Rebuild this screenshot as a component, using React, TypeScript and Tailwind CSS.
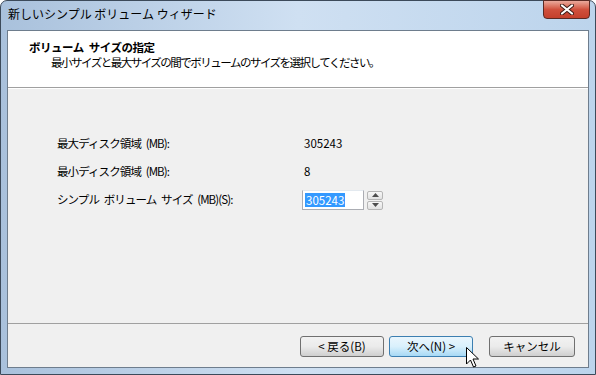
import React from 'react';

const jp = { fontFamily: "'Noto Sans CJK JP', 'Noto Sans', sans-serif" };

const WinButton: React.FC<{ label: string; hot?: boolean; className?: string }> = ({ label, hot, className }) => (
  <div
    className={`h-[21px] w-[84px] rounded-[3px] border flex items-center justify-center text-[11.5px] leading-none text-black ${
      hot
        ? 'border-[#3c7fb1] bg-gradient-to-b from-[#eaf6fd] via-[#d9f0fc] to-[#a7d9f5]'
        : 'border-[#707070] bg-gradient-to-b from-[#f2f2f2] via-[#ebebeb] to-[#cfcfcf]'
    } ${className ?? ''}`}
  >
    {label}
  </div>
);

const Cursor = () => (
  <svg width="13" height="21" viewBox="0 0 13 21" className="absolute left-[466px] top-[347px]">
    <path d="M0.5 0.5 L0.5 17 L4.5 13 L7.5 20 L10 19 L7 12 L12.5 12 Z" fill="#fff" stroke="#000" strokeWidth="1" strokeLinejoin="round" />
  </svg>
);

const App: React.FC = () => {
  return (
    <div className="relative w-[596px] h-[375px] overflow-hidden bg-white" style={jp}>
      {/* window frame */}
      <div className="w-full h-full flex flex-col rounded-t-[7px] border border-[#3c4a5a] bg-gradient-to-r from-[#a9c1dc] via-[#cfe0f2] to-[#bcd4ec]">
        {/* title bar */}
        <div className="h-[29px] flex items-start justify-between">
          <span className="pl-[7px] pt-[7px] text-[12px] leading-none text-black">新しいシンプル ボリューム ウィザード</span>
          <div className="mr-[5px] mt-[-1px] w-[47px] h-[19px] rounded-b-[4px] border border-[#5a2a24] bg-gradient-to-b from-[#e9a99c] via-[#d0503d] to-[#c4402c] flex items-center justify-center">
            <svg width="14" height="11" viewBox="0 0 14 11">
              <path d="M2 1.5 L12 9.5 M12 1.5 L2 9.5" stroke="#3b1a15" strokeWidth="4" strokeLinecap="round" />
              <path d="M2 1.5 L12 9.5 M12 1.5 L2 9.5" stroke="#fff" strokeWidth="2.2" strokeLinecap="round" />
            </svg>
          </div>
        </div>

        {/* client area */}
        <div className="mx-[6px] flex-1 flex flex-col border border-[#6e7d8d] bg-[#f0f0f0]">
          {/* header */}
          <div className="h-[57px] bg-white border-b border-[#a0a0a0] flex flex-col pt-[9px] text-[11.5px] text-black">
            <div className="pl-[21px] font-bold leading-[15px] tracking-[-0.5px] [word-spacing:3px]">ボリューム サイズの指定</div>
            <div className="pl-[43px] leading-[15px] tracking-[-1.5px]">最小サイズと最大サイズの間でボリュームのサイズを選択してください。</div>
          </div>

          {/* body */}
          <div className="flex-1 border-t border-white pt-[45px] pl-[49px]">
            <div className="grid grid-cols-[247px_auto] auto-rows-[28px] text-[11.5px] tracking-[-0.9px] [word-spacing:3px] text-black">
              <div className="flex items-center h-[20px]">最大ディスク領域 (MB):</div>
              <div className="flex items-center h-[20px] tracking-normal">305243</div>
              <div className="flex items-center h-[20px]">最小ディスク領域 (MB):</div>
              <div className="flex items-center h-[20px] tracking-normal">8</div>
              <div className="flex items-center h-[20px]">シンプル ボリューム サイズ (MB)(S):</div>
              <div className="flex items-center h-[20px] -ml-[2px] gap-[3px] tracking-normal">
                <div className="w-[62px] h-[20px] border border-[#abadb3] border-t-[#e3e9ef] bg-white flex items-center pl-[2px]">
                  <span className="bg-[#3399ff] text-white leading-[14px] px-[1px]">305243</span>
                </div>
                <div className="flex flex-col gap-[1px]">
                  <div className="w-[16px] h-[9px] rounded-[2px] border border-[#b5b5b5] bg-gradient-to-b from-[#f7f7f7] to-[#e2e2e2] flex items-center justify-center">
                    <svg width="7" height="4" viewBox="0 0 7 4"><path d="M0 4 L3.5 0 L7 4 Z" fill="#4d4d4d" /></svg>
                  </div>
                  <div className="w-[16px] h-[9px] rounded-[2px] border border-[#b5b5b5] bg-gradient-to-b from-[#f7f7f7] to-[#e2e2e2] flex items-center justify-center">
                    <svg width="7" height="4" viewBox="0 0 7 4"><path d="M0 0 L3.5 4 L7 0 Z" fill="#4d4d4d" /></svg>
                  </div>
                </div>
              </div>
            </div>
          </div>

          {/* footer */}
          <div className="h-[44px] border-t border-[#a0a0a0] flex items-start pt-[12px] pl-[292px]">
            <WinButton label="< 戻る(B)" />
            <WinButton label="次へ(N) >" hot className="ml-[5px]" />
            <WinButton label="キャンセル" className="ml-[16px] w-[86px]" />
          </div>
        </div>
        <div className="h-[6px]" />
      </div>
      <Cursor />
    </div>
  );
};

export default App;
